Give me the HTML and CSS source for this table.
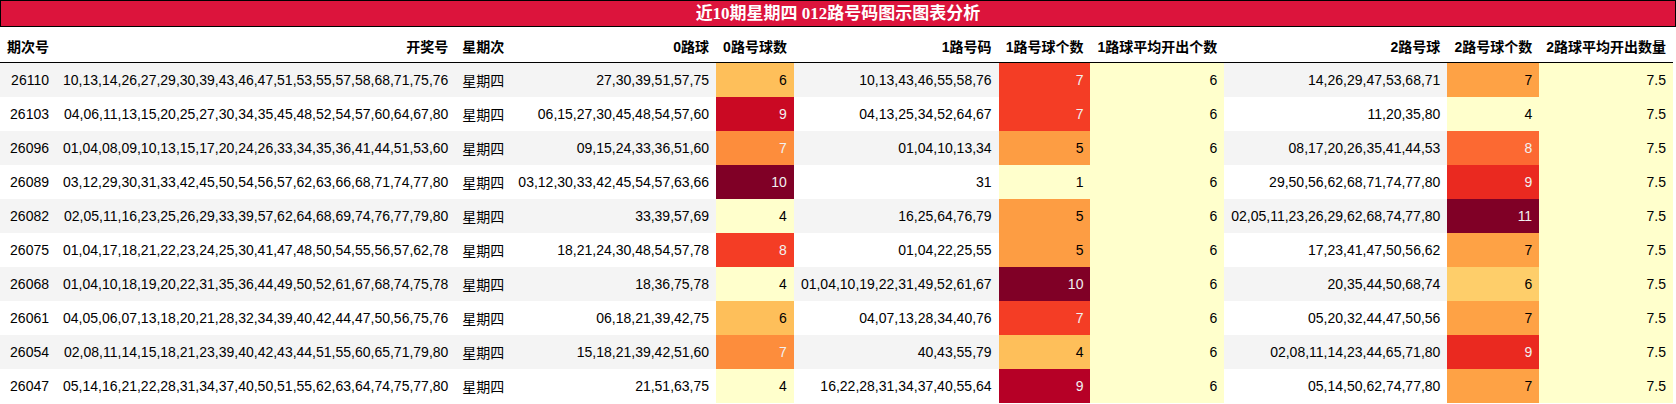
FILE: index.html
```html
<!DOCTYPE html>
<html lang="zh">
<head>
<meta charset="utf-8">
<title>近10期星期四 012路号码图示图表分析</title>
<link rel="stylesheet" href="styles.css">
</head>
<body>
<div class="title">近10期星期四 012路号码图示图表分析</div>
<table class="grid">
<thead>
<tr><th>期次号</th><th>开奖号</th><th>星期次</th><th>0路球</th><th>0路号球数</th><th>1路号码</th><th>1路号球个数</th><th>1路球平均开出个数</th><th>2路号球</th><th>2路号球个数</th><th>2路球平均开出数量</th></tr>
</thead>
<tbody>
<tr><td>26110</td><td>10,13,14,26,27,29,30,39,43,46,47,51,53,55,57,58,68,71,75,76</td><td>星期四</td><td>27,30,39,51,57,75</td><td style="background:#febf5a">6</td><td>10,13,43,46,55,58,76</td><td class="lt" style="background:#f43d25">7</td><td class="avg">6</td><td>14,26,29,47,53,68,71</td><td style="background:#fea245">7</td><td class="avg">7.5</td></tr>
<tr><td>26103</td><td>04,06,11,13,15,20,25,27,30,34,35,45,48,52,54,57,60,64,67,80</td><td>星期四</td><td>06,15,27,30,45,48,54,57,60</td><td class="lt" style="background:#ca0923">9</td><td>04,13,25,34,52,64,67</td><td class="lt" style="background:#f43d25">7</td><td class="avg">6</td><td>11,20,35,80</td><td style="background:#ffffcc">4</td><td class="avg">7.5</td></tr>
<tr><td>26096</td><td>01,04,08,09,10,13,15,17,20,24,26,33,34,35,36,41,44,51,53,60</td><td>星期四</td><td>09,15,24,33,36,51,60</td><td class="lt" style="background:#fd8d3c">7</td><td>01,04,10,13,34</td><td style="background:#fd9d43">5</td><td class="avg">6</td><td>08,17,20,26,35,41,44,53</td><td class="lt" style="background:#fc6932">8</td><td class="avg">7.5</td></tr>
<tr><td>26089</td><td>03,12,29,30,31,33,42,45,50,54,56,57,62,63,66,68,71,74,77,80</td><td>星期四</td><td>03,12,30,33,42,45,54,57,63,66</td><td class="lt" style="background:#800026">10</td><td>31</td><td style="background:#ffffcc">1</td><td class="avg">6</td><td>29,50,56,62,68,71,74,77,80</td><td class="lt" style="background:#ea2920">9</td><td class="avg">7.5</td></tr>
<tr><td>26082</td><td>02,05,11,16,23,25,26,29,33,39,57,62,64,68,69,74,76,77,79,80</td><td>星期四</td><td>33,39,57,69</td><td style="background:#ffffcc">4</td><td>16,25,64,76,79</td><td style="background:#fd9d43">5</td><td class="avg">6</td><td>02,05,11,23,26,29,62,68,74,77,80</td><td class="lt" style="background:#800026">11</td><td class="avg">7.5</td></tr>
<tr><td>26075</td><td>01,04,17,18,21,22,23,24,25,30,41,47,48,50,54,55,56,57,62,78</td><td>星期四</td><td>18,21,24,30,48,54,57,78</td><td class="lt" style="background:#f43d25">8</td><td>01,04,22,25,55</td><td style="background:#fd9d43">5</td><td class="avg">6</td><td>17,23,41,47,50,56,62</td><td style="background:#fea245">7</td><td class="avg">7.5</td></tr>
<tr><td>26068</td><td>01,04,10,18,19,20,22,31,35,36,44,49,50,52,61,67,68,74,75,78</td><td>星期四</td><td>18,36,75,78</td><td style="background:#ffffcc">4</td><td>01,04,10,19,22,31,49,52,61,67</td><td class="lt" style="background:#800026">10</td><td class="avg">6</td><td>20,35,44,50,68,74</td><td style="background:#fece6a">6</td><td class="avg">7.5</td></tr>
<tr><td>26061</td><td>04,05,06,07,13,18,20,21,28,32,34,39,40,42,44,47,50,56,75,76</td><td>星期四</td><td>06,18,21,39,42,75</td><td style="background:#febf5a">6</td><td>04,07,13,28,34,40,76</td><td class="lt" style="background:#f43d25">7</td><td class="avg">6</td><td>05,20,32,44,47,50,56</td><td style="background:#fea245">7</td><td class="avg">7.5</td></tr>
<tr><td>26054</td><td>02,08,11,14,15,18,21,23,39,40,42,43,44,51,55,60,65,71,79,80</td><td>星期四</td><td>15,18,21,39,42,51,60</td><td class="lt" style="background:#fd8d3c">7</td><td>40,43,55,79</td><td style="background:#febf5a">4</td><td class="avg">6</td><td>02,08,11,14,23,44,65,71,80</td><td class="lt" style="background:#ea2920">9</td><td class="avg">7.5</td></tr>
<tr><td>26047</td><td>05,14,16,21,22,28,31,34,37,40,50,51,55,62,63,64,74,75,77,80</td><td>星期四</td><td>21,51,63,75</td><td style="background:#ffffcc">4</td><td>16,22,28,31,34,37,40,55,64</td><td class="lt" style="background:#b60026">9</td><td class="avg">6</td><td>05,14,50,62,74,77,80</td><td style="background:#fea245">7</td><td class="avg">7.5</td></tr>
</tbody>
</table>
</body>
</html>
```

FILE: styles.css
```css
html, body {
  margin: 0;
  padding: 0;
  background: #ffffff;
}

.title {
  box-sizing: border-box;
  height: 27px;
  border: 1px solid #000000;
  background: #dc143c;
  color: #ffffff;
  font-family: "Liberation Serif", "Noto Sans CJK SC", serif;
  font-weight: bold;
  font-size: 17px;
  line-height: 25px;
  text-align: center;
}

.grid {
  border-collapse: collapse;
  border-spacing: 0;
  font-family: "Liberation Sans", "Noto Sans CJK SC", sans-serif;
  font-size: 14px;
  color: #000000;
}

.grid th,
.grid td {
  padding: 0 7px;
  text-align: right;
  white-space: nowrap;
}

.grid th {
  height: 35px;
  padding-top: 3px;
  box-sizing: border-box;
  font-weight: bold;
  border-bottom: 1px solid #000000;
  background: #ffffff;
}

.grid td {
  height: 34px;
}

.grid tbody tr:nth-child(odd) {
  background: #f4f4f4;
}

.grid tbody tr:nth-child(even) {
  background: #ffffff;
}

.grid td.avg {
  background: #ffffcc;
}

.grid td.lt {
  color: #f1f1f1;
}
```
